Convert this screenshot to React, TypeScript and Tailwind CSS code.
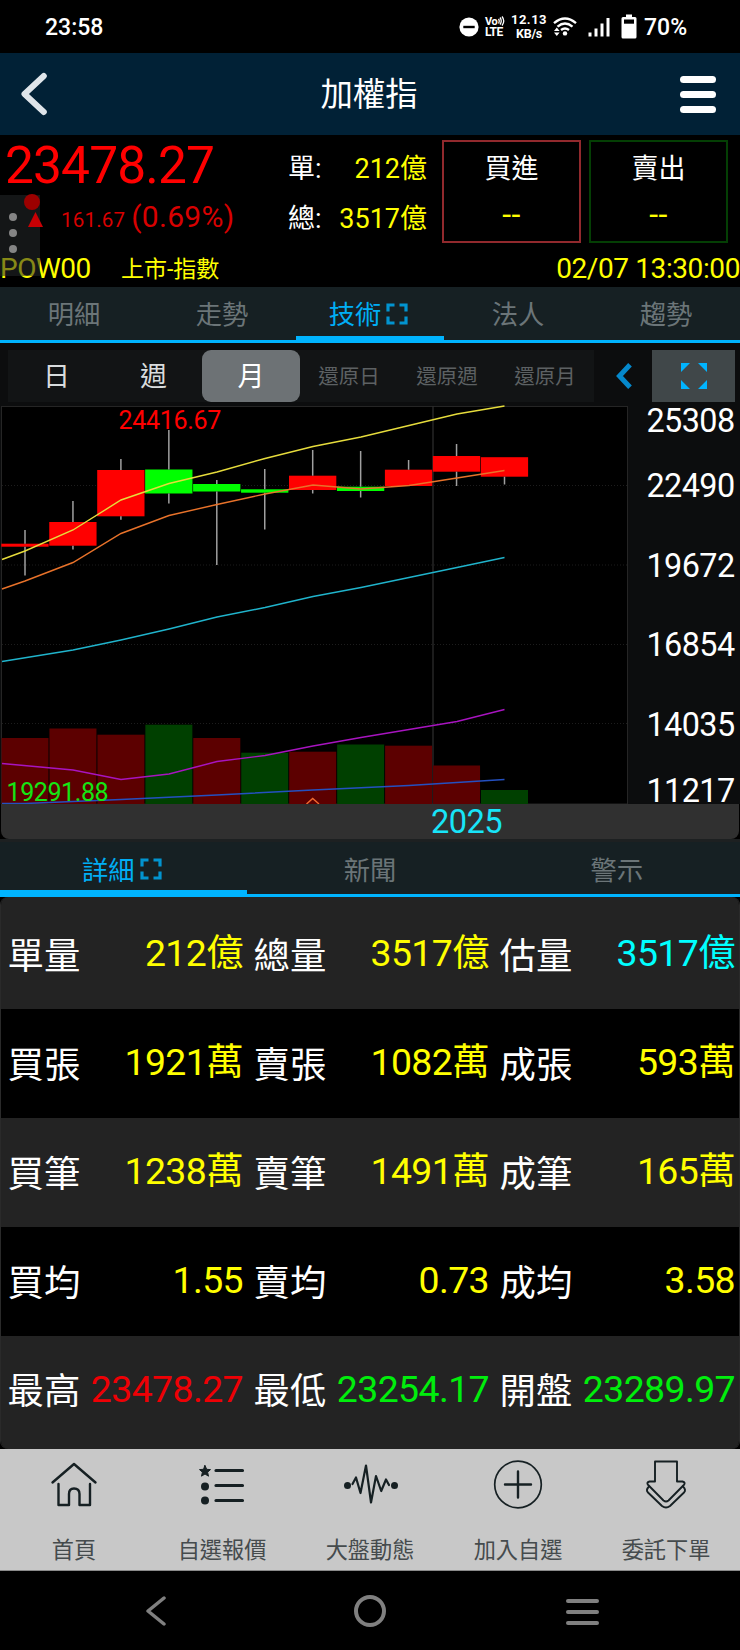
import type { ReactNode } from "react";

const SANS = "font-['Roboto','Noto_Sans_CJK_TC',sans-serif]";

type Cell = { label: string; value: string; color: string };

const YELLOW = "text-[#ffff00]";
const CYAN = "text-[#00ffff]";
const RED = "text-[#ee0005]";
const GREEN = "text-[#00ee0c]";

const rows: Cell[][] = [
  [
    { label: "單量", value: "212億", color: YELLOW },
    { label: "總量", value: "3517億", color: YELLOW },
    { label: "估量", value: "3517億", color: CYAN },
  ],
  [
    { label: "買張", value: "1921萬", color: YELLOW },
    { label: "賣張", value: "1082萬", color: YELLOW },
    { label: "成張", value: "593萬", color: YELLOW },
  ],
  [
    { label: "買筆", value: "1238萬", color: YELLOW },
    { label: "賣筆", value: "1491萬", color: YELLOW },
    { label: "成筆", value: "165萬", color: YELLOW },
  ],
  [
    { label: "買均", value: "1.55", color: YELLOW },
    { label: "賣均", value: "0.73", color: YELLOW },
    { label: "成均", value: "3.58", color: YELLOW },
  ],
  [
    { label: "最高", value: "23478.27", color: RED },
    { label: "最低", value: "23254.17", color: GREEN },
    { label: "開盤", value: "23289.97", color: GREEN },
  ],
];

// Chart space: x from the left edge of the screen, y from the top of the plot.
const STEP = 47.95;
const candles = [
  { top: 137.7, bottom: 140.7, high: 124, low: 169.5, up: true, vol: 332, volUp: true },
  { top: 116, bottom: 139.7, high: 95, low: 143.5, up: true, vol: 322.5, volUp: true },
  { top: 64, bottom: 110.3, high: 53, low: 113.7, up: true, vol: 328.7, volUp: true },
  { top: 63.5, bottom: 87.5, high: 24, low: 97.5, up: false, vol: 318.7, volUp: false },
  { top: 78, bottom: 85.5, high: 74, low: 159, up: false, vol: 332, volUp: true },
  { top: 83.3, bottom: 86.7, high: 63, low: 123.5, up: false, vol: 346.7, volUp: false },
  { top: 69.7, bottom: 84, high: 44, low: 87.5, up: true, vol: 345.7, volUp: true },
  { top: 80.7, bottom: 85, high: 45, low: 91.5, up: false, vol: 338.5, volUp: false },
  { top: 63.7, bottom: 80, high: 54, low: 80, up: true, vol: 339.7, volUp: true },
  { top: 50, bottom: 65.7, high: 38, low: 80, up: true, vol: 359.5, volUp: true },
  { top: 51.2, bottom: 70.7, high: 51.2, low: 78.5, up: true, vol: 384, volUp: false },
];

const lines = [
  { color: "#e6dc3c", points: "2,153.5 25,145 73,124 121,94 169,77.5 217,66 265,52.5 313,40.5 361,31 409,19.5 457,8 504.5,0" },
  { color: "#e8722a", points: "2,183 25,175 73,156.5 121,127.5 169,109.5 217,98.5 265,88 313,79 361,83 409,79.5 457,72 504.5,64.5" },
  { color: "#20b4cc", points: "2,255.5 73,244 121,234 169,223 217,211 265,201.5 313,190.5 361,181.5 409,171.5 457,161.5 504.5,151.5" },
  { color: "#a814c0", points: "2,357.5 73,364 121,373.5 169,368 217,355.5 265,349.5 313,340 361,331.5 409,323.5 457,315.5 504.5,303.5" },
  { color: "#2450c0", points: "2,397.5 25,397.5 121,393.5 217,389 313,384 409,379.5 504.5,373.5" },
];

const axis = [
  { value: "25308", y: 26 },
  { value: "22490", y: 91 },
  { value: "19672", y: 170.5 },
  { value: "16854", y: 250 },
  { value: "14035", y: 329.5 },
  { value: "11217", y: 396 },
];

function StatusBar() {
  return (
    <div className="flex h-[53px] items-center bg-black pr-[53px] pl-[45px] text-white">
      <span className="flex-1 pt-1 text-[23px] font-medium">23:58</span>
      <div className="flex items-center">
        <svg className="h-5 w-5" viewBox="0 0 20 20">
          <circle cx="10" cy="10" r="9.6" fill="#fff" />
          <rect x="4.3" y="8.8" width="11.4" height="2.4" fill="#000" />
        </svg>
        <div className="relative ml-1.5 flex w-[20px] flex-col text-[12px] leading-[10px] font-bold">
          <span className="text-[11px] tracking-[-0.5px]">Vo</span>
          <span className="tracking-[-0.6px]">LTE</span>
          <svg className="absolute top-[-1px] right-0 h-2.5 w-[7px]" viewBox="0 0 7 10" fill="none" stroke="#fff" strokeWidth="1.3">
            <path d="M0.5 3 Q2 5 0.5 7.5 M2 1.5 Q4.5 5 2 8.5 M4 0.5 Q7.5 5 4 9.5" />
          </svg>
        </div>
        <div className="ml-[7px] flex w-[34px] flex-col items-center text-[13px] leading-[14px] font-bold whitespace-nowrap">
          <span className="tracking-[0.5px]">12.13</span>
          <span className="text-[12.5px] tracking-[-0.2px]">KB/s</span>
        </div>
        <svg className="ml-[7px] h-[20px] w-[24px]" viewBox="0 0 24 20" fill="none" stroke="#fff" strokeWidth="2.4">
          <path d="M1 6.2 Q12 -3.2 23 6.2" />
          <path d="M4.5 9.6 Q12 3.6 19.5 9.6" />
          <path d="M8 13 Q12 9.8 16 13" />
          <circle cx="12" cy="16.4" r="2.2" fill="#fff" stroke="none" />
          <path d="M3.8 10.5 L6.6 14 H1 Z M1 15.4 H6.6 L3.8 18.9 Z" fill="#fff" stroke="none" />
        </svg>
        <svg className="ml-[11px] h-[20px] w-[22px]" viewBox="0 0 22 20" fill="#fff">
          <rect x="0.5" y="15.5" width="3" height="4" />
          <rect x="6.5" y="11.5" width="3" height="8" />
          <rect x="12.5" y="6.5" width="3" height="13" />
          <rect x="18.5" y="1" width="3" height="18.5" />
        </svg>
        <svg className="ml-[11px] h-[25px] w-[16px]" viewBox="0 0 16 25">
          <path d="M5 0.5 H11 V3 H14 Q15.5 3 15.5 4.5 V23 Q15.5 24.5 14 24.5 H2 Q0.5 24.5 0.5 23 V4.5 Q0.5 3 2 3 H5 Z" fill="#fff" />
          <rect x="3" y="5.5" width="10" height="4.2" fill="#000" />
        </svg>
        <span className="ml-[7px] w-[43px] pt-1 text-[23px] font-medium">70%</span>
      </div>
    </div>
  );
}

function Header() {
  return (
    <header className="flex h-[82px] items-center justify-between bg-[#012136] pr-6 pl-5">
      <svg className="h-[44px] w-[38px]" viewBox="0 0 38 44" fill="none" stroke="#dfe5ea" strokeWidth="6" strokeLinecap="round" strokeLinejoin="round">
        <path d="M23.8 4 L4.5 22 L23.8 40" />
      </svg>
      <h1 className="pt-0.5 text-[32.4px] text-white">加權指</h1>
      <div className="flex w-[36px] flex-col gap-2">
        <div className="h-[7px] rounded-full bg-white" />
        <div className="h-[7px] rounded-full bg-white" />
        <div className="h-[7px] rounded-full bg-white" />
      </div>
    </header>
  );
}

function TradeBox({ label, border }: { label: string; border: string }) {
  return (
    <div className={`flex h-[103px] w-[139px] flex-col items-center border-2 ${border}`}>
      <span className="mt-[8px] text-[27px] leading-[38px] text-white">{label}</span>
      <span className="mt-[7px] text-[32px] leading-[38px] tracking-[0.4px] text-[#ffff00]">--</span>
    </div>
  );
}

function Quote() {
  return (
    <section className="relative flex h-[152px] flex-col bg-black">
      <div className="flex h-[112px]">
        <div className="flex w-[288px] flex-col pl-[5px]">
          <span className="mt-[5px] text-[51.5px] leading-[52px] tracking-[-0.9px] text-[#ff0000]">23478.27</span>
          <div className="mt-[8px] flex items-baseline text-[#d80000]">
            <svg className="relative z-10 ml-[23px] h-[15px] w-[15px]" viewBox="0 0 15 15">
              <path d="M7.5 0 L15 15 H0 Z" fill="#c80004" />
            </svg>
            <span className="ml-[18px] text-[20.5px] leading-[34px] tracking-[0.2px]">161.67</span>
            <span className="ml-[6px] text-[30px] leading-[34px] tracking-[0.3px]">(0.69%)</span>
          </div>
        </div>
        <div className="flex w-[139px] flex-col pt-[15px] text-[27px] leading-[38px]">
          <div className="flex justify-between">
            <span className="text-white">單:</span>
            <span className="text-[#ffff00]">212億</span>
          </div>
          <div className="mt-[12px] flex justify-between">
            <span className="text-white">總:</span>
            <span className="text-[#ffff00]">3517億</span>
          </div>
        </div>
        <div className="ml-[15px] flex gap-2 pt-[5px]">
          <TradeBox label="買進" border="border-[#91292d]" />
          <TradeBox label="賣出" border="border-[#043f04]" />
        </div>
      </div>
      <div className="flex h-[40px] items-center pt-[3px] text-[28px] leading-[36px] whitespace-nowrap text-[#ffff00]">
        <span className="w-[121px] tracking-[-0.5px]">POW00</span>
        <span className="flex-1 pt-[3px] text-[23px]">上市-指數</span>
        <span className="text-[28px] tracking-[-0.4px]">02/07 13:30:00</span>
      </div>
      {/* floating assistant handle */}
      <div className="absolute top-[60px] left-0 flex h-[81px] w-10 flex-col items-center gap-2 bg-[#25282a]/55 pt-[18px] pr-3.5">
        <i className="h-2 w-2 rounded-full bg-[#858585]" />
        <i className="h-2 w-2 rounded-full bg-[#858585]" />
        <i className="h-2 w-2 rounded-full bg-[#858585]" />
      </div>
      <i className="absolute top-[59px] left-6 h-4 w-4 rounded-full bg-[#9c0000]" />
    </section>
  );
}

function ExpandIcon() {
  return (
    <svg className="mr-[3px] mb-1 h-[22px] w-[22px]" viewBox="0 0 22 22" fill="none" stroke="#0294d0" strokeWidth="3.2">
      <path d="M2 8.5 V2 H8.5 M13.5 2 H20 V8.5 M20 13.5 V20 H13.5 M8.5 20 H2 V13.5" />
    </svg>
  );
}

function Tabs({ items, active, className }: { items: string[]; active: string; className: string }) {
  return (
    <nav className={`flex bg-[#162023] ${className}`}>
      {items.map((item) => (
        <div
          key={item}
          className={`flex flex-1 items-center justify-center gap-[5px] border-[#00b4ff] text-[26.3px] ${
            item === active ? "border-b-[7px] pt-2 text-[#00aef5]" : "border-b-3 pt-1 text-[#6b7578]"
          }`}
        >
          <span className="pt-px">{item}</span>
          {item === active && <ExpandIcon />}
        </div>
      ))}
    </nav>
  );
}

function Toolbar() {
  return (
    <div className="flex h-[63px] items-start bg-[#0c0d0e] pt-[7px] pr-[5px] pl-2">
      <div className="flex h-[52px] bg-[#121415] text-[27px] text-[#d8dcdd]">
        <span className="flex w-[97px] items-center justify-center pt-0.5">日</span>
        <span className="flex w-[97px] items-center justify-center pt-0.5">週</span>
        <span className="flex w-[98px] items-center justify-center rounded-[9px] bg-[#6d7275] pt-0.5 text-white">月</span>
        <span className="flex w-[98px] items-center justify-center pt-[3px] text-[20.5px] text-[#5d6163]">還原日</span>
        <span className="flex w-[98px] items-center justify-center pt-[3px] text-[20.5px] text-[#5d6163]">還原週</span>
        <span className="flex w-[98px] items-center justify-center pt-[3px] text-[20.5px] text-[#5d6163]">還原月</span>
      </div>
      <svg className="mt-3 ml-[20px] h-7 w-[20px]" viewBox="0 0 20 28" fill="none" stroke="#0588cc" strokeWidth="5">
        <path d="M16 2.8 L5.5 14 L16 25.2" />
      </svg>
      <div className="ml-auto flex h-[52px] w-[83px] items-center justify-center bg-[#404749]">
        <svg className="h-[26px] w-[26px]" viewBox="0 0 26 26" fill="#00b4ff">
          <path d="M0 0 H9 L0 9 Z M17 0 H26 V9 Z M26 17 V26 H17 Z M0 17 L9 26 H0 Z" />
        </svg>
      </div>
    </div>
  );
}

function Chart() {
  return (
    <svg className="block h-[398px] w-full overflow-visible bg-[#0c0d0e]" viewBox="0 0 740 398" fontFamily="Roboto, sans-serif">
      <rect x="1.5" y="0.5" width="626" height="397.5" fill="#000" stroke="#252525" />
      {[79.5, 159, 238.5, 317.5].map((y) => (
        <line key={y} x1="2" x2="628" y1={y} y2={y} stroke="#1d1d1d" strokeDasharray="1 2" />
      ))}
      <line x1="433" x2="433" y1="0" y2="398" stroke="#2c2c2c" strokeWidth="1.3" />
      {candles.map((c, i) => (
        <rect key={i} x={1.5 + i * STEP} y={c.vol} width={47} height={398 - c.vol} fill={c.volUp ? "#5c0000" : "#004000"} />
      ))}
      {candles.map((c, i) => (
        <g key={i}>
          <rect x={1.3 + i * STEP} y={c.top} width={47.3} height={c.bottom - c.top} fill={c.up ? "#ff0000" : "#00ff00"} />
          {c.high < c.top && <line x1={25 + i * STEP} x2={25 + i * STEP} y1={c.high} y2={c.top} stroke="#a0a0a0" strokeWidth="1.5" />}
          {c.low > c.bottom && <line x1={25 + i * STEP} x2={25 + i * STEP} y1={c.bottom} y2={c.low} stroke="#a0a0a0" strokeWidth="1.5" />}
        </g>
      ))}
      {lines.map((line) => (
        <polyline key={line.color} points={line.points} fill="none" stroke={line.color} strokeWidth="1.4" />
      ))}
      <path d="M306.5 398 L312.7 392.5 L319 398" fill="none" stroke="#f06a30" strokeWidth="1.4" />
      <text x="118.5" y="22.5" fontSize="25" letterSpacing="-0.3" fill="#ff0000">24416.67</text>
      <text x="6.5" y="395" fontSize="25" letterSpacing="-0.4" fill="#14e614">19291.88</text>
      {axis.map((a) => (
        <text key={a.value} x="734.5" y={a.y} fontSize="32.4" letterSpacing="-0.6" textAnchor="end" fill="#fff">
          {a.value}
        </text>
      ))}
    </svg>
  );
}

function DetailTable() {
  return (
    <section className="overflow-hidden rounded-lg border-x border-[#2a2a2a]">
      {rows.map((row, i) => (
        <div
          key={i}
          className={`flex ${i % 2 ? "bg-black" : "bg-[#232323]"} ${i === 0 ? "h-[112px] pt-[3px]" : i === 4 ? "h-[113px] pb-[5px]" : "h-[109px]"}`}
        >
          {row.map((cell) => (
            <div key={cell.label} className="flex flex-1 items-center justify-between pr-1 pl-[6.5px] leading-[44px] whitespace-nowrap">
              <span className="pt-1 text-[36.4px] text-white">{cell.label}</span>
              <span className={`pb-[3px] text-[37.4px] tracking-[-0.6px] ${cell.color}`}>{cell.value}</span>
            </div>
          ))}
        </div>
      ))}
    </section>
  );
}

function NavItem({ label, children }: { label: string; children: ReactNode }) {
  return (
    <div className="flex flex-1 flex-col items-center pt-2.5">
      <svg className="h-[52px] w-[60px]" viewBox="0 0 60 52" fill="none" stroke="#162023" strokeWidth="2.4" strokeLinecap="round" strokeLinejoin="round">
        {children}
      </svg>
      <span className="mt-[22px] text-[22.2px] leading-[34px] text-[#454b4d]">{label}</span>
    </div>
  );
}

function BottomNav() {
  return (
    <nav className="flex h-[122px] border-b border-[#8a8a8a] bg-[#c8c8c8]">
      <NavItem label="首頁">
        <path d="M8.5 23.5 L30 5 L51.5 23.5" />
        <path d="M14.5 25 V46 H25 V35 Q25 29.5 30 29.5 Q35.5 29.5 35.5 35 V46 H46 V25" />
      </NavItem>
      <NavItem label="自選報價">
        <path d="M24 11.5 H50.5 M24 26.5 H50.5 M24 41.5 H50.5" strokeWidth="3.2" />
        <path d="M13 6.5 L14.7 10.3 L18.5 10.6 L15.6 13.2 L16.5 17.2 L13 15 L9.5 17.2 L10.4 13.2 L7.5 10.6 L11.3 10.3 Z" fill="#162023" strokeWidth="1" />
        <circle cx="13" cy="27.5" r="4" fill="#162023" stroke="none" />
        <circle cx="13" cy="41.5" r="4" fill="#162023" stroke="none" />
      </NavItem>
      <NavItem label="大盤動態">
        <circle cx="7.5" cy="26.5" r="3.5" fill="#162023" stroke="none" />
        <circle cx="54.5" cy="26.5" r="3.5" fill="#162023" stroke="none" />
        <path d="M12.5 25 L16 18.5 L20.5 34 L26 6.5 L31 43.5 L36 17 L41.2 32 L46 20.5 L49 26" strokeWidth="2.2" />
      </NavItem>
      <NavItem label="加入自選">
        <circle cx="30" cy="25.5" r="23.3" strokeWidth="1.7" />
        <path d="M30 12.5 V38.5 M17 25.5 H43" />
      </NavItem>
      <NavItem label="委託下單">
        <path d="M19 2.5 H41 V22.5 H46.5 Q50 23.5 47.8 26 L32.5 41.5 Q30 43.5 27.5 41.5 L12.2 26 Q10 23.5 13.5 22.5 H19 Z" strokeWidth="1.9" />
        <path d="M13 27.5 Q9.5 31 12 33.5 L26 47 Q30 50 34 47 L48 33.5 Q50.5 31 47 27.5" strokeWidth="1.9" />
      </NavItem>
    </nav>
  );
}

function SystemNav() {
  return (
    <div className="flex h-[79px] items-center justify-between bg-black pr-[141px] pl-[144px]">
      <svg className="h-[30px] w-[24px]" viewBox="0 0 24 30" fill="none" stroke="#808080" strokeWidth="3.5" strokeLinecap="round" strokeLinejoin="round">
        <path d="M20 2 L4 15 L20 28" />
      </svg>
      <div className="ml-[6px] h-8 w-8 rounded-full border-4 border-[#808080]" />
      <div className="flex w-[33px] flex-col gap-[7px] pt-0.5">
        <div className="h-1 rounded-full bg-[#808080]" />
        <div className="h-1 rounded-full bg-[#808080]" />
        <div className="h-1 rounded-full bg-[#808080]" />
      </div>
    </div>
  );
}

export default function App() {
  return (
    <div className={`flex h-[1650px] w-[740px] flex-col overflow-hidden bg-black ${SANS}`}>
      <StatusBar />
      <Header />
      <Quote />
      <Tabs items={["明細", "走勢", "技術", "法人", "趨勢"]} active="技術" className="h-[56px]" />
      <Toolbar />
      <Chart />
      <div className="mx-px flex h-[35px] items-center rounded-b-lg bg-[#303030] pt-0.5 pl-[430px]">
        <span className="text-[32.6px] leading-[33px] tracking-[-0.6px] text-[#18e4f8]">2025</span>
      </div>
      <div className="h-[3px] bg-[#1d2021]" />
      <Tabs items={["詳細", "新聞", "警示"]} active="詳細" className="h-[55px] pt-0.5" />
      <DetailTable />
      <BottomNav />
      <SystemNav />
    </div>
  );
}
